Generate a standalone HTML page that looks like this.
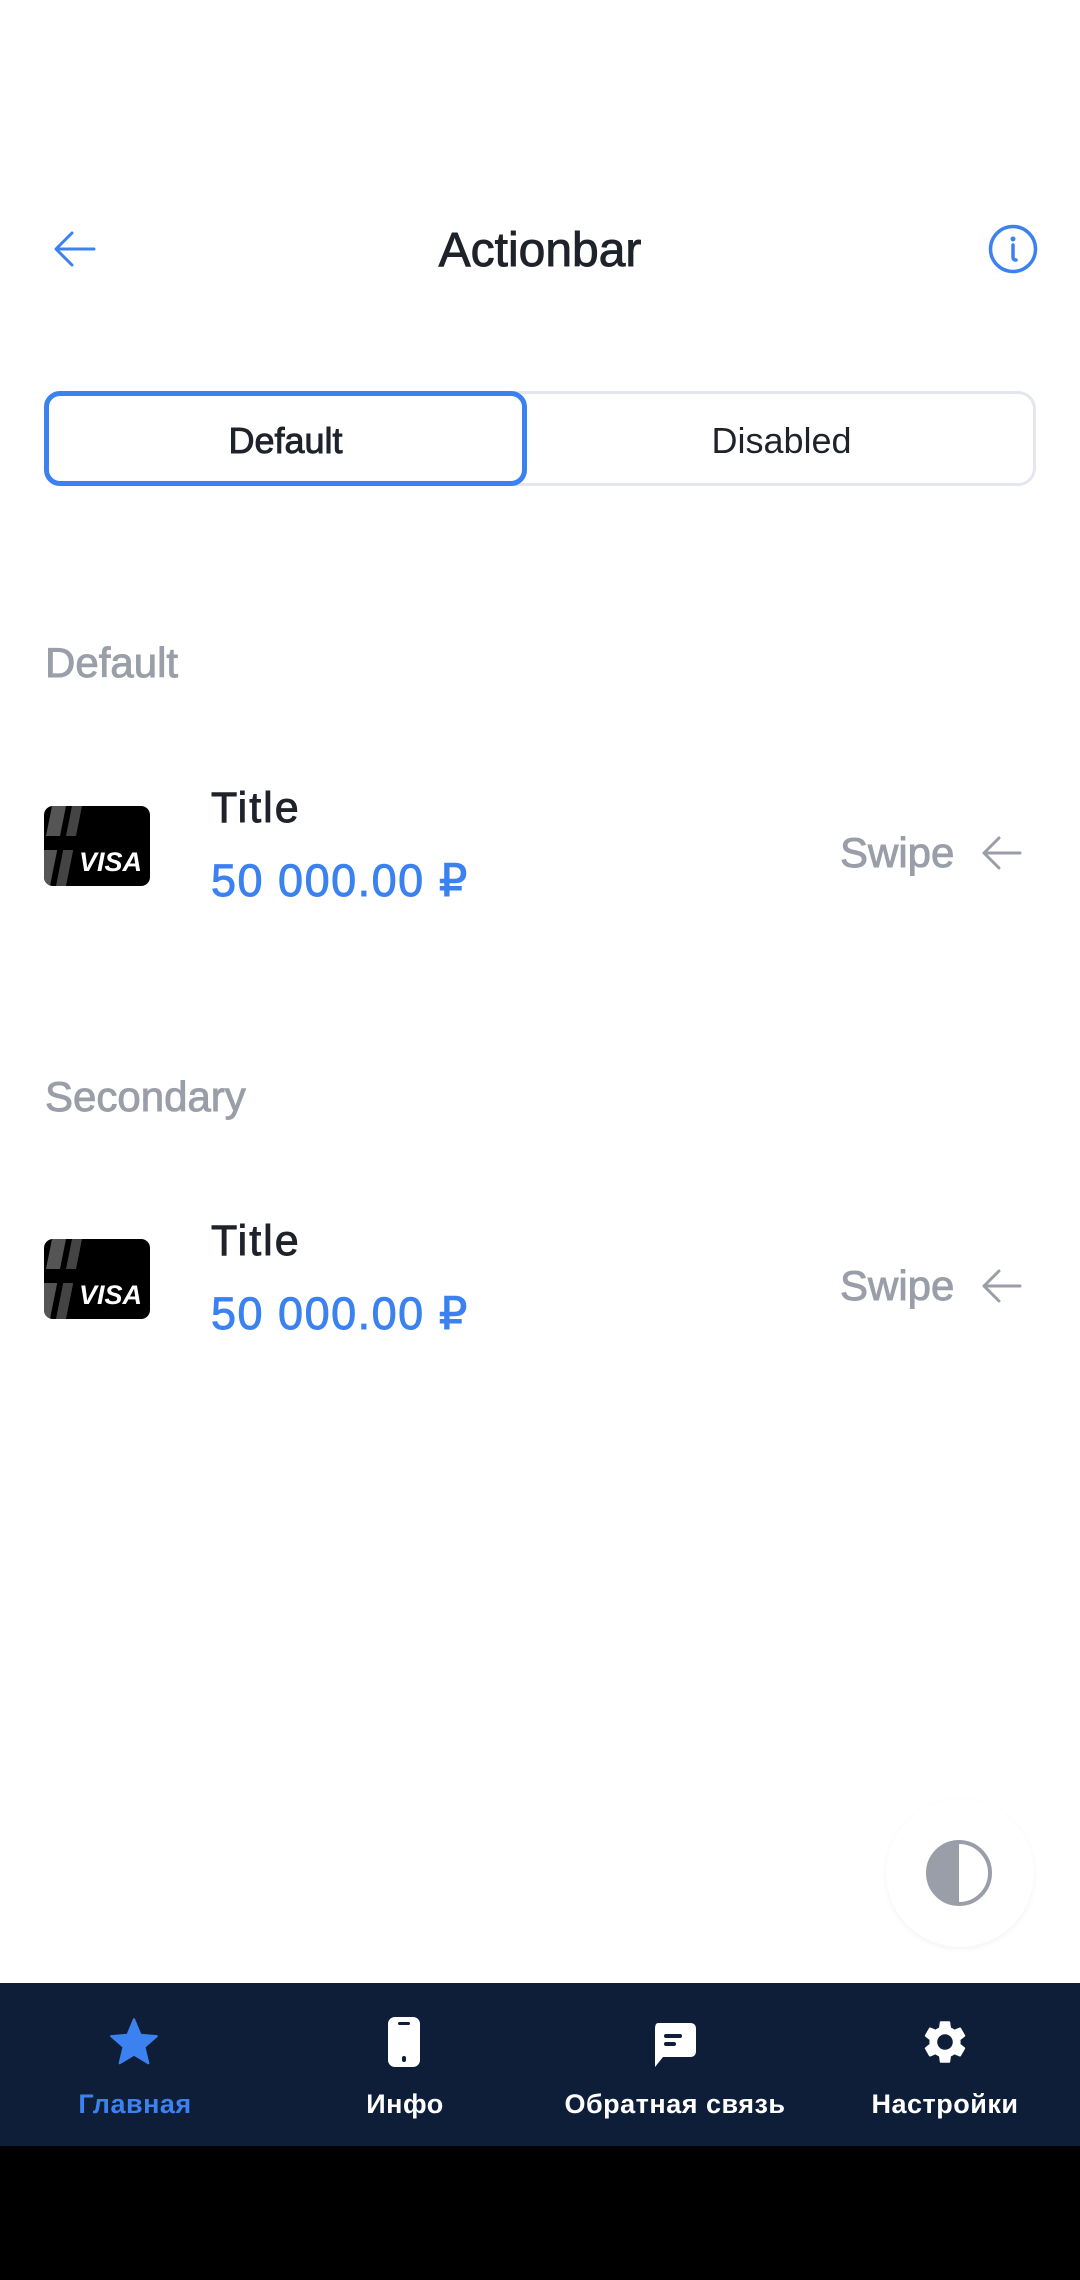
<!DOCTYPE html>
<html><head><meta charset="utf-8"><style>
*{margin:0;padding:0;box-sizing:border-box}
body{width:1080px;height:2280px;background:#fff;position:relative;overflow:hidden;font-family:"Liberation Sans",sans-serif}
.a{position:absolute}
.med{-webkit-text-stroke:0.9px currentColor}
.title{left:0;width:1080px;text-align:center;top:222px;font-size:48px;color:#1f222b;line-height:58px}
.seg{left:44px;top:391px;width:992px;height:95px;border:3px solid #e3e6ec;border-radius:18px}
.sel{left:44px;top:391px;width:483px;height:95px;border:5px solid #3b82f0;border-radius:16px;background:#fff}
.segt{font-size:36px;color:#1f222b;line-height:95px;text-align:center;top:393px}
.lbl{left:45px;font-size:42px;color:#9a9ea8}
.ti{left:211px;font-size:43px;color:#1f222b;letter-spacing:2px}
.am{left:211px;font-size:45px;color:#3b82f0;letter-spacing:1.5px}
.sw{left:840px;font-size:42px;color:#9a9ea8}
.nav{left:0;top:1983px;width:1080px;height:163px;background:#0f1e38}
.blk{left:0;top:2146px;width:1080px;height:134px;background:#000}
.nl{top:2089px;font-size:27px;font-weight:bold;color:#fff;text-align:center;width:270px;letter-spacing:0.5px}
</style></head><body>
<svg class="a" style="left:52px;top:228px" width="46" height="42" viewBox="0 0 46 42"><path d="M42 21H5M20 5L4 21l16 16" stroke="#3b82f0" stroke-width="3" fill="none" stroke-linecap="round" stroke-linejoin="round"/></svg>
<div class="a title med">Actionbar</div>
<svg class="a" style="left:988px;top:224px" width="50" height="50" viewBox="0 0 50 50"><circle cx="25" cy="25" r="22.5" stroke="#3b82f0" stroke-width="3.5" fill="none"/><circle cx="25" cy="15" r="2.5" fill="#3b82f0"/><path d="M25 21v12q0 3 3 3" stroke="#3b82f0" stroke-width="3.5" fill="none" stroke-linecap="round"/></svg>
<div class="a seg"></div>
<div class="a sel"></div>
<div class="a segt med" style="left:44px;width:483px">Default</div>
<div class="a segt" style="left:527px;width:509px">Disabled</div>

<div class="a lbl med" style="top:639px">Default</div>
<div class="a lbl med" style="top:1073px">Secondary</div>

<!-- row 1 -->
<svg class="a" style="left:44px;top:806px" width="106" height="80" viewBox="0 0 106 80"><defs><clipPath id="c1"><rect width="106" height="80" rx="9"/></clipPath></defs><g clip-path="url(#c1)"><rect width="106" height="80" fill="#000"/><path d="M8 0h14L6 80H-8z" fill="#555"/><path d="M28 0h10L22 80H12z" fill="#444"/><rect x="0" y="30" width="106" height="14" fill="#000"/><text x="98" y="65" font-family="Liberation Sans" font-weight="bold" font-style="italic" font-size="27" fill="#fff" text-anchor="end">VISA</text></g></svg>
<div class="a ti med" style="top:784px">Title</div>
<div class="a am med" style="top:854px">50 000.00 ₽</div>
<div class="a sw med" style="top:829px">Swipe</div>
<svg class="a" style="left:980px;top:834px" width="42" height="38" viewBox="0 0 42 38"><path d="M40 19H4M19 4L4 19l15 15" stroke="#9a9ea8" stroke-width="3" fill="none" stroke-linecap="round" stroke-linejoin="round"/></svg>

<!-- row 2 -->
<svg class="a" style="left:44px;top:1239px" width="106" height="80" viewBox="0 0 106 80"><defs><clipPath id="c2"><rect width="106" height="80" rx="9"/></clipPath></defs><g clip-path="url(#c2)"><rect width="106" height="80" fill="#000"/><path d="M8 0h14L6 80H-8z" fill="#555"/><path d="M28 0h10L22 80H12z" fill="#444"/><rect x="0" y="30" width="106" height="14" fill="#000"/><text x="98" y="65" font-family="Liberation Sans" font-weight="bold" font-style="italic" font-size="27" fill="#fff" text-anchor="end">VISA</text></g></svg>
<div class="a ti med" style="top:1217px">Title</div>
<div class="a am med" style="top:1287px">50 000.00 ₽</div>
<div class="a sw med" style="top:1262px">Swipe</div>
<svg class="a" style="left:980px;top:1267px" width="42" height="38" viewBox="0 0 42 38"><path d="M40 19H4M19 4L4 19l15 15" stroke="#9a9ea8" stroke-width="3" fill="none" stroke-linecap="round" stroke-linejoin="round"/></svg>

<!-- theme button -->
<div class="a" style="left:886px;top:1799px;width:148px;height:148px;border-radius:50%;background:#fff;box-shadow:0 2px 6px rgba(0,0,0,0.05)"></div>
<svg class="a" style="left:925px;top:1839px" width="68" height="68" viewBox="0 0 68 68"><circle cx="34" cy="34" r="31" stroke="#9a9ea8" stroke-width="4" fill="none"/><path d="M34 3a31 31 0 0 0 0 62z" fill="#9a9ea8"/></svg>

<div class="a nav"></div>
<div class="a blk"></div>
<svg class="a" style="left:108px;top:2016px" width="52" height="52" viewBox="0 0 24 24"><path d="M12 1.5l3 7.2 7.5.6-5.7 5 1.8 7.5L12 17.8 5.4 21.8l1.8-7.5-5.7-5 7.5-.6z" fill="#3b82f0" stroke="#3b82f0" stroke-width="1" stroke-linejoin="round"/></svg>
<svg class="a" style="left:386px;top:2016px" width="36" height="52" viewBox="0 0 36 52"><rect x="2" y="1" width="32" height="50" rx="7" fill="#fff"/><rect x="12" y="6" width="12" height="3" rx="1.5" fill="#0f1e38"/><rect x="16" y="40" width="4" height="6" rx="2" fill="#0f1e38"/></svg>
<svg class="a" style="left:651px;top:2022px" width="46" height="46" viewBox="0 0 46 46"><path d="M7 1h32q6 0 6 6v22q0 6-6 6H12L4 45V7q0-6 3-6z" fill="#fff"/><rect x="13" y="12" width="18" height="4" rx="2" fill="#0f1e38"/><rect x="13" y="20" width="12" height="4" rx="2" fill="#0f1e38"/></svg>
<svg class="a" style="left:919px;top:2016px" width="52" height="52" viewBox="0 0 24 24"><path fill="#fff" d="M19.14 12.94c.04-.3.06-.61.06-.94 0-.32-.02-.64-.07-.94l2.030-1.58a.49.49 0 00.12-.61l-1.92-3.32a.488.488 0 00-.59-.22l-2.39.96c-.5-.38-1.030-.7-1.62-.94l-.36-2.54a.484.484 0 00-.48-.41h-3.84c-.24 0-.43.17-.47.41l-.36 2.54c-.59.24-1.13.57-1.62.94l-2.39-.96c-.22-.08-.47 0-.59.22L2.74 8.87c-.12.21-.08.47.12.61l2.030 1.58c-.05.3-.09.63-.09.94s.02.64.07.94l-2.030 1.58a.49.49 0 00-.12.61l1.92 3.32c.12.22.37.29.59.22l2.39-.96c.5.38 1.030.7 1.62.94l.36 2.54c.05.24.24.41.48.41h3.84c.24 0 .44-.17.47-.41l.36-2.54c.59-.24 1.13-.56 1.62-.94l2.39.96c.22.08.47 0 .59-.22l1.92-3.32c.12-.22.07-.47-.12-.61l-2.010-1.58zM12 15.6c-1.98 0-3.6-1.62-3.6-3.6s1.62-3.6 3.6-3.6 3.6 1.62 3.6 3.6-1.62 3.6-3.6 3.6z"/></svg>
<div class="a nl" style="left:0;color:#3b82f0">Главная</div>
<div class="a nl" style="left:270px">Инфо</div>
<div class="a nl" style="left:540px">Обратная связь</div>
<div class="a nl" style="left:810px">Настройки</div>
</body></html>
